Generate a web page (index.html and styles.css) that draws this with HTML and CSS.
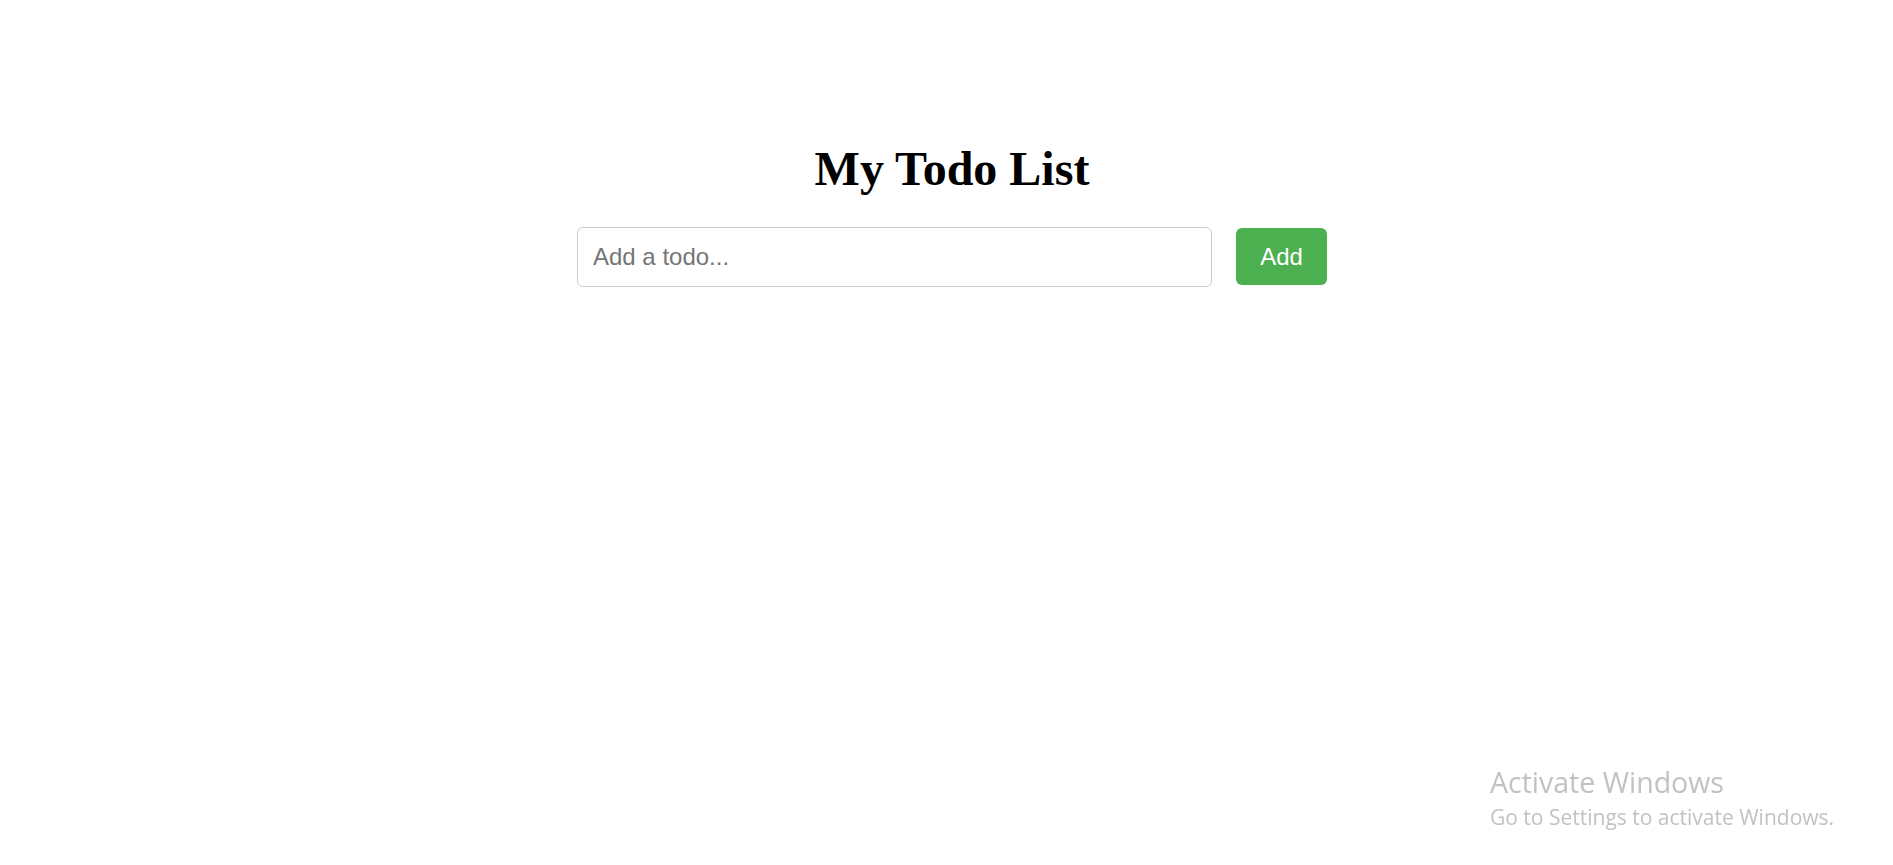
FILE: index.html
```html
<!DOCTYPE html>
<html lang="en">
<head>
<meta charset="utf-8">
<title>My Todo List</title>
<link rel="stylesheet" href="styles.css">
</head>
<body>
<main class="app">
  <h1 class="title">My Todo List</h1>
  <form class="todo-form" onsubmit="return false;">
    <input class="todo-input" type="text" placeholder="Add a todo...">
    <button class="add-btn" type="submit">Add</button>
  </form>
  <ul class="todo-list"></ul>
</main>
<div class="watermark">
  <div class="wm-title">Activate Windows</div>
  <div class="wm-sub">Go to Settings to activate Windows.</div>
</div>
</body>
</html>
```
FILE: styles.css
```css
html, body {
  margin: 0;
  padding: 0;
  background: #fff;
}
body {
  font-family: "Liberation Serif", "Times New Roman", serif;
  padding-left: 11px;
}
.app {
  width: 750px;
  margin: 0 auto;
  padding-top: 141px;
}
.title {
  font-family: "Liberation Serif", "Times New Roman", serif;
  font-weight: bold;
  font-size: 48px;
  line-height: 55px;
  text-align: center;
  margin: 0 0 31px;
  color: #000;
}
.todo-form {
  display: flex;
  gap: 24px;
  margin: 0;
}
.todo-input {
  flex: 1;
  height: 60px;
  box-sizing: border-box;
  padding: 0 15px;
  font-family: "Liberation Sans", Arial, sans-serif;
  font-size: 24px;
  border: 1px solid #ccc;
  border-radius: 6px;
  color: #222;
  outline: none;
}
.todo-input::placeholder {
  color: #757575;
}
.add-btn {
  margin-top: 1px;
  height: 57px;
  width: 91px;
  box-sizing: border-box;
  padding: 0;
  border: none;
  border-radius: 6px;
  background: #4caf50;
  color: #fff;
  font-family: "Liberation Sans", Arial, sans-serif;
  font-size: 24px;
  cursor: pointer;
}
.todo-list {
  list-style: none;
  padding: 0;
  margin: 0;
}
.watermark {
  position: fixed;
  left: 1490px;
  top: 763px;
  color: #c2c2c2;
  font-family: "Open Sans", "Noto Sans", sans-serif;
  pointer-events: none;
}
.wm-title {
  font-size: 28.5px;
  line-height: 38px;
}
.wm-sub {
  font-size: 21px;
  line-height: 32px;
}
```
